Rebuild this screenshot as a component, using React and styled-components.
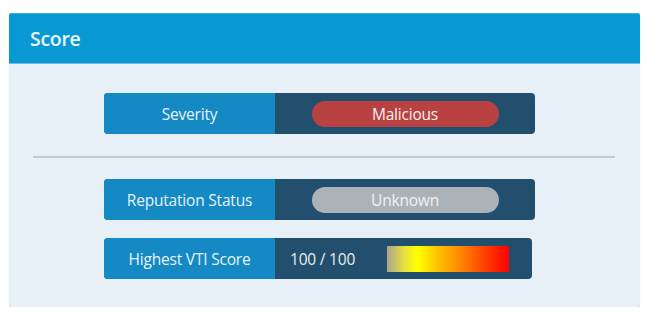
import React from 'react';
import styled, { createGlobalStyle } from 'styled-components';

const Global = createGlobalStyle`
  body {
    margin: 0;
    background: #fff;
    font-family: "Open Sans", "Noto Sans", sans-serif;
  }
`;

const Page = styled.div`
  padding: 13px 11px 0 9px;
`;

const Card = styled.div`
  width: 631px;
  background: #e8f0f7;
  border-radius: 3px;
  box-shadow: 0 1px 1px rgba(120, 145, 165, 0.45);
  overflow: hidden;
`;

const Header = styled.div`
  height: 49px;
  background: #0899d5;
  border-top: 1px solid #3cb2e4;
  border-bottom: 1px solid #6fbde2;
  display: flex;
  align-items: center;
  padding-left: 21px;
  color: #eaf6fc;
  font-size: 19.5px;
  font-weight: 600;
  letter-spacing: -0.3px;
`;

const Body = styled.div`
  padding: 29px 25px 28px 24px;
  display: flex;
  flex-direction: column;
`;

const Row = styled.div`
  display: flex;
  height: 41px;
  width: ${p => p.$width || 431}px;
  margin-left: 71px;
  margin-top: ${p => p.$top || 0}px;
  border-radius: 4px;
  overflow: hidden;
  background: #234f6e;
`;

const Label = styled.div`
  width: 171px;
  flex: none;
  background: #1589c4;
  color: #e6f3fb;
  font-size: 15.5px;
  letter-spacing: -0.2px;
  display: flex;
  align-items: center;
  justify-content: center;
`;

const Value = styled.div`
  flex: 1;
  display: flex;
  align-items: center;
  justify-content: ${p => (p.$left ? 'flex-start' : 'center')};
  padding-left: ${p => (p.$left ? '15px' : '0')};
  color: #e8eef3;
  font-size: 15.5px;
  letter-spacing: -0.2px;
`;

const Pill = styled.div`
  width: 187px;
  height: 26px;
  border-radius: 13px;
  background: ${p => p.$color};
  color: #f4f1f1;
  display: flex;
  align-items: center;
  justify-content: center;
`;

const Divider = styled.div`
  height: 2px;
  background: #c3cbd2;
  margin-top: 22px;
`;

const ScoreText = styled.span`
  width: 97px;
  flex: none;
`;

const Gradient = styled.div`
  width: 122px;
  height: 26px;
  background: linear-gradient(
    to right,
    #aaa290 0%,
    #e6e040 14%,
    #ffff00 25%,
    #ffc000 42%,
    #ff8000 62%,
    #ff3000 85%,
    #ff0000 100%
  );
`;

export default function App() {
  return (
    <>
      <Global />
      <Page>
        <Card>
          <Header>Score</Header>
          <Body>
            <Row>
              <Label>Severity</Label>
              <Value>
                <Pill $color="#b94141">Malicious</Pill>
              </Value>
            </Row>
            <Divider />
            <Row $top={21}>
              <Label>Reputation Status</Label>
              <Value>
                <Pill $color="#abb3b8">Unknown</Pill>
              </Value>
            </Row>
            <Row $top={18} $width={428}>
              <Label>Highest VTI Score</Label>
              <Value $left>
                <ScoreText>100 / 100</ScoreText>
                <Gradient />
              </Value>
            </Row>
          </Body>
        </Card>
      </Page>
    </>
  );
}
